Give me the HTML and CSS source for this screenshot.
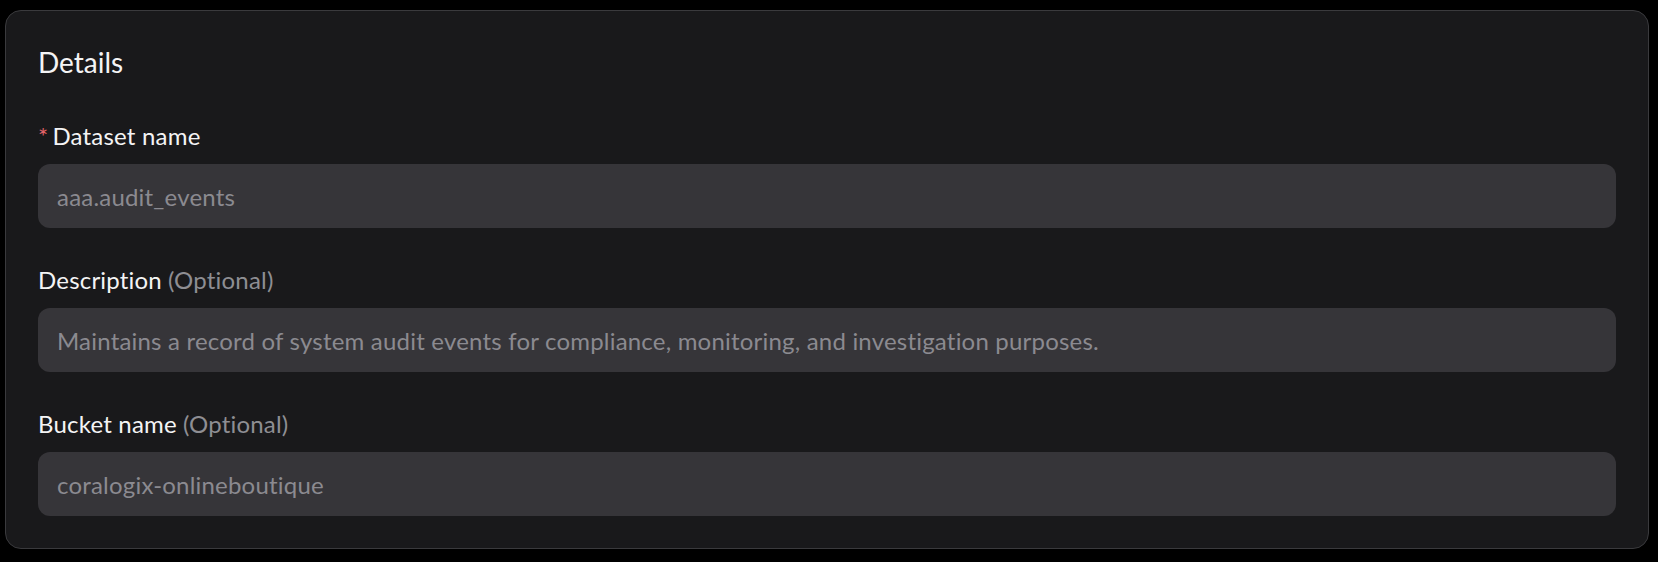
FILE: index.html
```html
<!DOCTYPE html>
<html lang="en">
<head>
<meta charset="utf-8">
<title>Details</title>
<link rel="stylesheet" href="styles.css">
</head>
<body>
  <section class="card">
    <h2 class="card-title">Details</h2>
    <div class="field">
      <label class="label"><span class="req">*</span>Dataset name</label>
      <div class="input">aaa.audit_events</div>
    </div>
    <div class="field">
      <label class="label">Description <span class="opt">(Optional)</span></label>
      <div class="input">Maintains a record of system audit events for compliance, monitoring, and investigation purposes.</div>
    </div>
    <div class="field">
      <label class="label">Bucket name <span class="opt">(Optional)</span></label>
      <div class="input">coralogix-onlineboutique</div>
    </div>
  </section>
</body>
</html>
```

FILE: styles.css
```css
html, body {
  margin: 0;
  background: #000;
}
body {
  padding: 10px 9px 0 5px;
  font-family: Lato, "Noto Sans", sans-serif;
  color: #f4f4f5;
}
.card {
  background: #19191b;
  border: 1px solid #3a3a3d;
  border-radius: 16px;
  padding: 33px 32px 32px;
  display: flex;
  flex-direction: column;
  gap: 38px;
}
.card-title {
  margin: 0 0 4px;
  font-size: 28px;
  font-weight: 400;
  line-height: 36px;
}
.field {
  display: flex;
  flex-direction: column;
  gap: 14px;
}
.label {
  font-size: 24px;
  letter-spacing: 0.2px;
  line-height: 28px;
  display: flex;
  align-items: baseline;
  gap: 6px;
}
.req {
  color: #e5646a;
  font-size: 24px;
  margin-right: -2px;
}
.opt {
  color: #8e8e93;
}
.input {
  height: 64px;
  box-sizing: border-box;
  background: #363539;
  border-radius: 12px;
  padding: 0 19px;
  display: flex;
  align-items: center;
  font-size: 24px;
  letter-spacing: 0.2px;
  color: #8b8a90;
}
```
